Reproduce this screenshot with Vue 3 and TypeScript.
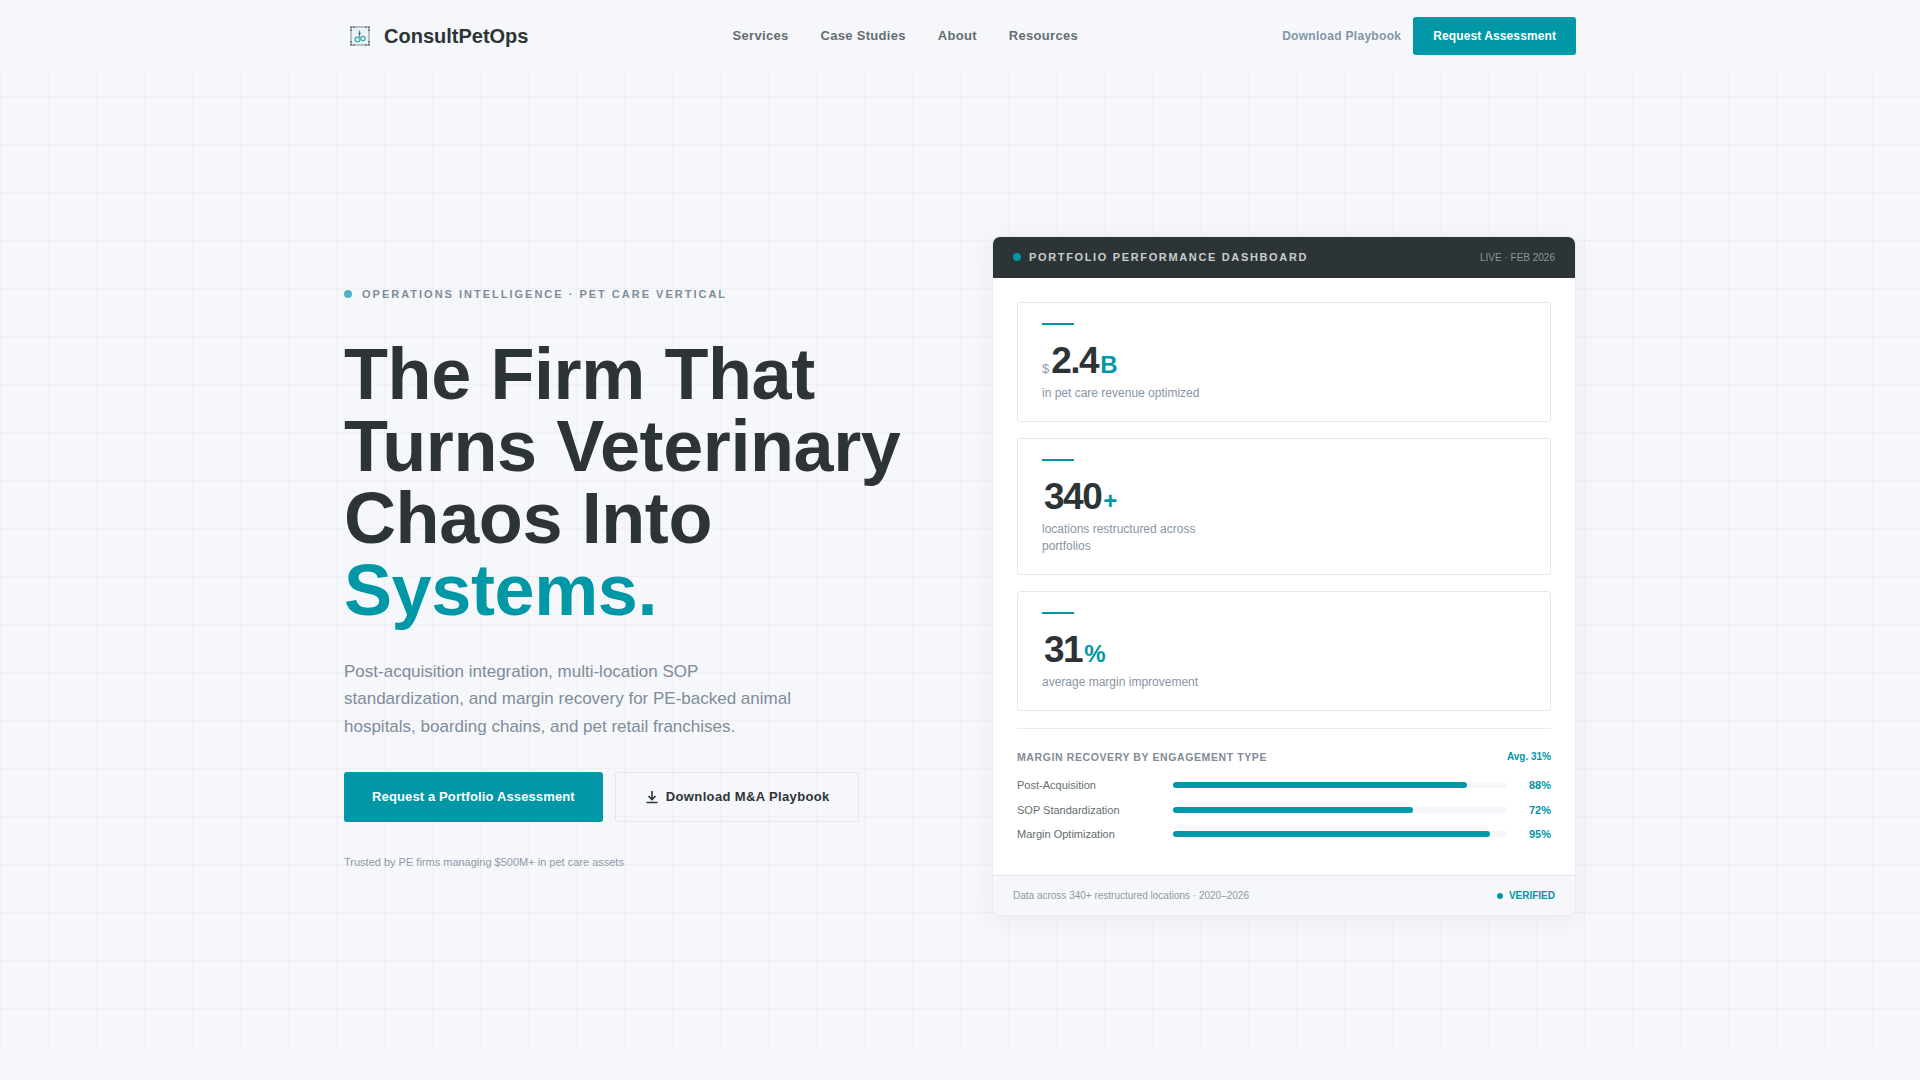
<script setup lang="ts">
const navLinks = ['Services', 'Case Studies', 'About', 'Resources']

const stats = [
  { prefix: '$', value: '2.4', suffix: 'B', label: 'in pet care revenue optimized' },
  { prefix: '', value: '340', suffix: '+', label: 'locations restructured across portfolios' },
  { prefix: '', value: '31', suffix: '%', label: 'average margin improvement' },
]

const bars = [
  { label: 'Post-Acquisition', pct: 88 },
  { label: 'SOP Standardization', pct: 72 },
  { label: 'Margin Optimization', pct: 95 },
]
</script>

<template>
  <div class="page">
    <div class="grid-bg"></div>
    <header class="nav">
      <div class="nav-inner">
        <a class="logo">
          <svg class="logo-icon" width="20" height="20" viewBox="0 0 20 20" fill="none">
            <rect x="1" y="1" width="18" height="18" fill="#e9f3f5" stroke="#8ea0ab" stroke-width="1.2" />
            <path d="M1 5V1h4M15 1h4v4M19 15v4h-4M5 19H1v-4" stroke="#4a5a63" stroke-width="1.2" stroke-dasharray="2 1" />
            <circle cx="7.5" cy="13.5" r="2.4" stroke="#3fa5b2" stroke-width="1.2" />
            <circle cx="13" cy="12.5" r="2.2" stroke="#3fa5b2" stroke-width="1.2" />
            <path d="M9.5 4.5v6.5" stroke="#3fa5b2" stroke-width="1.2" />
            <circle cx="9.5" cy="7.5" r="1.1" fill="#4a5a63" />
          </svg>
          <span>ConsultPetOps</span>
        </a>
        <nav class="nav-links">
          <a v-for="link in navLinks" :key="link">{{ link }}</a>
        </nav>
        <div class="nav-actions">
          <a class="nav-download">Download Playbook</a>
          <a class="nav-cta">Request Assessment</a>
        </div>
      </div>
    </header>

    <main class="hero">
      <div class="hero-inner">
        <section class="hero-copy">
          <div class="eyebrow"><i class="eyebrow-dot"></i>OPERATIONS INTELLIGENCE · PET CARE VERTICAL</div>
          <h1>The Firm That<br />Turns Veterinary<br />Chaos Into<br /><em>Systems.</em></h1>
          <p class="lead">Post-acquisition integration, multi-location SOP standardization, and margin recovery for PE-backed animal hospitals, boarding chains, and pet retail franchises.</p>
          <div class="hero-buttons">
            <a class="btn-primary">Request a Portfolio Assessment</a>
            <a class="btn-secondary">
              <svg width="16" height="16" viewBox="0 0 16 16" fill="none" stroke="#2d3436" stroke-width="1.6">
                <path d="M8 2v8M4.5 7L8 10.5 11.5 7M2.5 13.5h11" />
              </svg>
              Download M&amp;A Playbook
            </a>
          </div>
          <div class="trust">Trusted by PE firms managing $500M+ in pet care assets</div>
        </section>

        <aside class="dash">
          <div class="dash-head">
            <div class="dash-title"><i class="dot"></i>PORTFOLIO PERFORMANCE DASHBOARD</div>
            <div class="dash-live">LIVE · FEB 2026</div>
          </div>
          <div class="dash-body">
            <div class="stats">
              <div v-for="s in stats" :key="s.value" class="stat">
                <div class="stat-rule"></div>
                <div class="stat-num">
                  <span class="stat-prefix">{{ s.prefix }}</span><span class="stat-value">{{ s.value }}</span><span class="stat-suffix">{{ s.suffix }}</span>
                </div>
                <div class="stat-label">{{ s.label }}</div>
              </div>
            </div>
            <div class="chart">
              <div class="chart-head">
                <span class="chart-title">MARGIN RECOVERY BY ENGAGEMENT TYPE</span>
                <span class="chart-avg">Avg. 31%</span>
              </div>
              <div v-for="b in bars" :key="b.label" class="bar-row">
                <span class="bar-label">{{ b.label }}</span>
                <div class="bar-track"><div class="bar-fill" :style="{ width: b.pct + '%' }"></div></div>
                <span class="bar-pct">{{ b.pct }}%</span>
              </div>
            </div>
          </div>
          <div class="dash-foot">
            <span>Data across 340+ restructured locations · 2020–2026</span>
            <span class="verified"><i class="verified-dot"></i>VERIFIED</span>
          </div>
        </aside>
      </div>
    </main>
  </div>
</template>

<style>
html, body { margin: 0; background: #f5f7fa; }
</style>

<style scoped>
.page {
  position: relative;
  min-height: 1080px;
  overflow: hidden;
  background: #f5f7fa;
  font-family: "Liberation Sans", Arial, sans-serif;
  color: #2d3436;
}
.grid-bg {
  position: absolute;
  inset: 0;
  background-image:
    linear-gradient(rgba(45, 52, 54, 0.03) 1px, transparent 1px),
    linear-gradient(90deg, rgba(45, 52, 54, 0.03) 1px, transparent 1px);
  background-size: 48px 48px;
  -webkit-mask-image: linear-gradient(to bottom, #000 1046px, rgba(0, 0, 0, 0.35) 1047px, transparent 1064px);
  mask-image: linear-gradient(to bottom, #000 1046px, rgba(0, 0, 0, 0.35) 1047px, transparent 1064px);
}
.nav {
  position: relative;
  height: 72px;
  background: #f5f7fa;
}
.nav-inner {
  width: 1232px;
  height: 100%;
  margin: 0 auto;
  display: flex;
  align-items: center;
  justify-content: space-between;
}
.logo {
  display: flex;
  align-items: center;
  gap: 14px;
  padding-left: 6px;
  font-size: 20px;
  font-weight: 700;
  color: #2d3436;
}
.nav-links {
  display: flex;
  gap: 32px;
  padding-bottom: 1px;
  font-size: 13px;
  font-weight: 700;
  letter-spacing: 0.3px;
  color: #636e72;
}
.nav-actions {
  display: flex;
  align-items: center;
  gap: 12px;
}
.nav-download {
  font-size: 12px;
  font-weight: 700;
  letter-spacing: 0.3px;
  color: #8395a7;
}
.nav-cta {
  display: block;
  padding: 12px 20px;
  background: #0097a7;
  border-radius: 3px;
  color: #fff;
  font-size: 12px;
  font-weight: 700;
  line-height: 14px;
  letter-spacing: 0.1px;
}
.hero {
  position: relative;
  height: 1008px;
  display: flex;
  align-items: center;
}
.hero-inner {
  width: 1232px;
  margin: 0 auto;
  display: grid;
  grid-template-columns: 1fr 1fr;
  gap: 64px;
  align-items: center;
}
.hero-copy {
  padding-top: 4px;
}
.eyebrow {
  display: flex;
  align-items: center;
  gap: 10px;
  font-size: 11px;
  font-weight: 700;
  letter-spacing: 2px;
  color: #7f8c9a;
  margin-bottom: 38px;
}
.eyebrow-dot {
  width: 8px;
  height: 8px;
  border-radius: 50%;
  background: #4db6c6;
}
h1 {
  margin: 0 0 32px;
  font-size: 72px;
  line-height: 72px;
  font-weight: 700;
  letter-spacing: -0.4px;
  color: #2d3436;
}
h1 em {
  font-style: normal;
  color: #0097a7;
}
.lead {
  margin: 0 0 32px;
  max-width: 460px;
  font-size: 17px;
  line-height: 27.5px;
  color: #7f8c9a;
}
.hero-buttons {
  display: flex;
  gap: 12px;
  margin-bottom: 34px;
}
.btn-primary {
  display: block;
  padding: 17px 28px;
  background: #0097a7;
  border-radius: 3px;
  color: #fff;
  font-size: 13px;
  font-weight: 700;
  line-height: 16px;
  letter-spacing: 0.13px;
}
.btn-secondary {
  display: flex;
  align-items: center;
  gap: 6px;
  padding: 16px 28px;
  border: 1px solid #e3e7ec;
  border-radius: 3px;
  color: #2d3436;
  font-size: 13px;
  font-weight: 700;
  line-height: 16px;
  letter-spacing: 0.36px;
}
.trust {
  font-size: 11px;
  color: #8f9aa8;
}
.dash {
  background: #fff;
  border: 1px solid #e8ebef;
  border-radius: 8px;
  box-shadow: 0 4px 24px rgba(45, 52, 54, 0.06);
  overflow: hidden;
}
.dash-head {
  height: 41px;
  padding: 0 20px;
  background: #2d3436;
  display: flex;
  align-items: center;
  justify-content: space-between;
}
.dash-title {
  display: flex;
  align-items: center;
  gap: 8px;
  font-size: 11px;
  font-weight: 700;
  letter-spacing: 1.65px;
  color: #c8cdd0;
}
.dot {
  width: 8px;
  height: 8px;
  border-radius: 50%;
  background: #0097a7;
}
.dash-live {
  font-size: 10px;
  color: #8a9499;
}
.dash-body {
  padding: 24px 24px 29px;
}
.stats {
  display: flex;
  flex-direction: column;
  gap: 16px;
  padding-bottom: 17px;
  border-bottom: 1px solid #e8ebef;
  margin-bottom: 22px;
}
.stat {
  border: 1px solid #e3e7ec;
  border-radius: 3px;
  padding: 20px 24px 19px;
}
.stat-rule {
  width: 32px;
  height: 2px;
  background: #0097a7;
  margin-bottom: 16px;
}
.stat-num {
  display: flex;
  align-items: baseline;
  height: 40px;
  line-height: 40px;
}
.stat-prefix {
  margin-right: 2px;
  font-size: 13px;
  color: #8f9aa8;
}
.stat-value {
  font-size: 37px;
  font-weight: 700;
  letter-spacing: -1.5px;
  color: #2d3436;
}
.stat-suffix {
  margin-left: 2px;
  font-size: 24px;
  font-weight: 700;
  color: #0097a7;
}
.stat-label {
  max-width: 170px;
  margin-top: 4px;
  font-size: 12px;
  line-height: 17px;
  color: #8795a5;
}
.chart-head {
  display: flex;
  justify-content: space-between;
  margin-bottom: 10px;
  font-size: 10.5px;
  font-weight: 700;
}
.chart-title {
  letter-spacing: 0.6px;
  color: #7f8c9a;
}
.chart-avg {
  font-size: 10px;
  color: #0097a7;
}
.bar-row {
  display: flex;
  align-items: center;
  height: 24.5px;
  font-size: 11px;
}
.bar-label {
  width: 156px;
  color: #636e72;
}
.bar-track {
  width: 334px;
  height: 6px;
  border-radius: 3px;
  background: #f5f7fa;
}
.bar-fill {
  height: 100%;
  border-radius: 3px;
  background: #0097a7;
}
.bar-pct {
  flex: 1;
  text-align: right;
  font-weight: 700;
  color: #0097a7;
}
.dash-foot {
  height: 39px;
  padding: 0 20px;
  background: #f5f7fa;
  border-top: 1px solid #e3e7ec;
  display: flex;
  align-items: center;
  justify-content: space-between;
  font-size: 10px;
  color: #8f9aa8;
}
.verified {
  display: flex;
  align-items: center;
  gap: 6px;
  font-weight: 700;
  color: #0097a7;
}
.verified-dot {
  width: 6px;
  height: 6px;
  border-radius: 50%;
  background: #0097a7;
}
</style>
